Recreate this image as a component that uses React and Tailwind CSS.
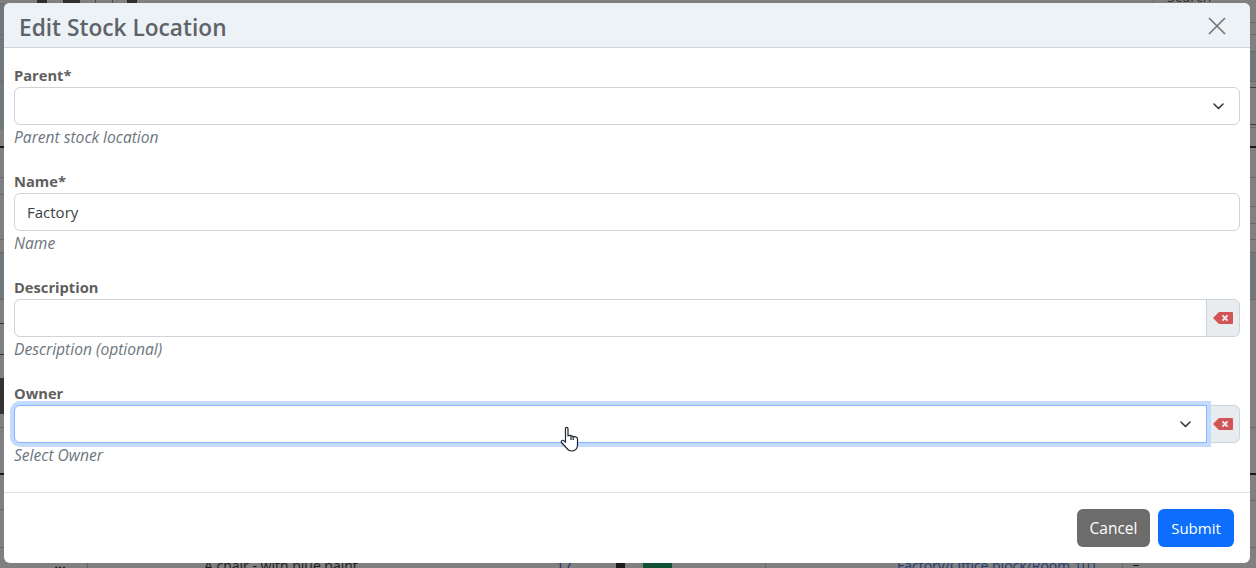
import React from "react";

const font = { fontFamily: '"Open Sans", "Noto Sans", sans-serif' };

const row = "border-t border-[#6a6a6a]";
const tint = "bg-[#71787c] border-t border-[#6a6a6a]";
const dark = "border-t-2 border-[#1a1a1a]";

// edges of the page behind the modal: [height, classes]
const leftEdge = [
  [31, tint], [47, tint], [48, tint], [17, "bg-[#808080]"], [31, dark], [17, row], [45, row],
  [13, row], [47, tint], [24, row], [31, "border-t border-[#333333]"], [24, "border-t border-[#333333]"],
  [36, "bg-[#333333]"], [13, "bg-[#808080]"], [46, row], [36, dark], [38, row], [16, row],
];

const rightEdge = [
  [19, "bg-[#808080]"], [12, row], [17, row], [30, tint], [6, row], [37, "border-t border-[#3f3f3f]"],
  [3, "border-t border-[#3f3f3f]"], [19, row], [31, dark], [29, row], [17, row], [16, row],
  [13, row], [47, tint], [128, row], [46, row], [27, dark], [47, row], [16, row],
];

const Edge = ({ parts, className }) => (
  <div className={`flex flex-col ${className}`}>
    {parts.map(([h, cls], i) => (
      <div key={i} className={cls} style={{ height: h }} />
    ))}
  </div>
);

const Chevron = () => (
  <svg width="11" height="7" viewBox="0 0 11 7" fill="none" className="shrink-0">
    <path d="M1 1 L5.5 5.5 L10 1" stroke="#343a40" strokeWidth="1.6" strokeLinecap="round" strokeLinejoin="round" />
  </svg>
);

const Backspace = () => (
  <svg width="20" height="12" viewBox="0 0 20 12">
    <path d="M6 0 H19 A1 1 0 0 1 20 1 V11 A1 1 0 0 1 19 12 H6 L0 6 Z" fill="#d25454" />
    <path d="M9.5 3.4 L14.5 8.6 M14.5 3.4 L9.5 8.6" stroke="#e9ecef" strokeWidth="2" />
  </svg>
);

const ClearButton = () => (
  <div className="w-[34px] h-[38px] shrink-0 -ml-px flex items-center justify-center bg-[#e9ecef] border border-[#ced4da] rounded-r-[6px]">
    <Backspace />
  </div>
);

const Field = ({ label, hint, children }) => (
  <div className="h-[106px]">
    <div className="h-[23px] text-[14.7px] leading-[22px] font-bold text-[#5f5f5f]">{label}</div>
    {children}
    <div className="text-[15.6px] leading-[24px] italic text-[#6c757d]">{hint}</div>
  </div>
);

const Cursor = () => (
  <svg className="absolute left-[545px] top-[20px]" width="20" height="26" viewBox="0 0 20 26" fill="white" stroke="#1f2533" strokeWidth="1.2" strokeLinejoin="round">
    <path d="M5.5 2.5 C5.5 1 8 1 8 2.5 V10 L9 9.5 C10 9 11 9.5 11 10.2 C12 9.6 13 10 13.2 10.8 C14.2 10.4 17.5 10.5 17.5 13 V19 C17.5 22.5 15 25 11.5 25 C8.5 25 7.5 23.5 6 21.5 L1.5 16.5 C0.6 15.2 2.2 13.6 3.6 14.6 L5.5 16.2 Z" />
    <path d="M11 10.2 V14 M13.2 10.8 V14" fill="none" />
  </svg>
);

const PageBehind = () => (
  <div className="col-start-1 row-start-1 flex flex-col h-[568px]">
    <div className="h-[3px] shrink-0 overflow-hidden flex items-start pl-[37px]">
      <div className="w-[10px] h-[3px] bg-[#2e2e2e]" />
      <div className="w-[17px] h-[3px] ml-[16px] bg-[#2e2e2e]" />
      <div className="w-[18px] h-[3px] ml-[15px] border-x border-[#4a4a4a]" />
      <div className="w-[10px] h-[3px] ml-[14px] bg-[#2e2e2e]" />
      <div className="ml-auto mr-[45px] w-[58px] pl-[13px] border-l border-[#666666] -mt-[13px] pt-[0px] text-[14px] leading-[20px] h-[20px] text-[#2e2e2e]">Search</div>
    </div>

    <div className="flex-1 flex justify-between">
      <Edge parts={leftEdge} className="w-[4px]" />
      <Edge parts={rightEdge} className="w-[6px]" />
    </div>

    <div className="h-[5px] shrink-0 overflow-hidden grid grid-cols-[87px_108px_353px_217px_125px_232px_134px] text-[14px] leading-[20px]">
      <div className="pl-[55px] text-[8px] leading-[6px] tracking-[1px] text-[#1c1c1c] pt-px">▪▪▪</div>
      <div className="h-[5px] border-l border-[#666666]" />
      <div className="h-[5px] border-l border-[#666666] pl-[8px] -mt-[7px] text-[#1c1c1c]">A chair - with blue paint</div>
      <div className="flex items-start pl-[8px] -mt-[7px] text-[#1f2f66]">
        <span>17</span>
        <div className="w-[9px] h-[12px] ml-[44px] bg-[#1c1c1c]" />
        <div className="w-[29px] h-[12px] ml-[18px] bg-[#0f5132]" />
      </div>
      <div className="h-[5px] border-l border-[#666666]" />
      <div className="h-[5px] border-l border-[#666666] pl-[6px] -mt-[7px] text-[#1f3a75]">Factory/Office block/Room 101</div>
      <div className="h-[5px] border-l border-[#666666] pl-[10px]">
        <div className="w-[6px] h-px mt-[2px] bg-[#1c1c1c]" />
      </div>
    </div>
  </div>
);

export default function App() {
  return (
    <div className="grid w-[1256px] h-[568px] overflow-hidden bg-[#808080]" style={font}>
      <PageBehind />

      <div className="col-start-1 row-start-1 pt-[3px] pl-[4px]">
        <div className="w-[1246px] h-[560px] flex flex-col bg-white rounded-[6px] overflow-hidden">
          <div className="h-[45px] shrink-0 flex items-center justify-between pl-[15px] pr-[24px] bg-[#edf2f7] border-b border-[#ced4da]">
            <h5 className="mt-[5px] text-[22.7px] leading-[40px] font-semibold text-[#5f6368]">Edit Stock Location</h5>
            <svg className="mt-px" width="18" height="18" viewBox="0 0 18 18" fill="none">
              <path d="M1 1 L17 17 M17 1 L1 17" stroke="#757575" strokeWidth="1.7" />
            </svg>
          </div>

          <div className="flex-1 pt-[16px] px-[10px]">
            <Field label="Parent*" hint="Parent stock location">
              <div className="h-[38px] flex items-center justify-end pr-[15px] bg-white border border-[#ced4da] rounded-[6px]">
                <Chevron />
              </div>
            </Field>
            <Field label="Name*" hint="Name">
              <div className="h-[38px] flex items-center pl-[12px] text-[15px] text-[#3a3f44] bg-white border border-[#ced4da] rounded-[6px]">
                Factory
              </div>
            </Field>
            <Field label="Description" hint="Description (optional)">
              <div className="flex">
                <div className="flex-1 h-[38px] bg-white border border-[#ced4da] rounded-l-[6px]" />
                <ClearButton />
              </div>
            </Field>
            <Field label="Owner" hint="Select Owner">
              <div className="flex">
                <div className="relative z-10 flex-1 h-[38px] flex items-center justify-end pr-[15px] bg-white border border-[#86b7fe] rounded-l-[6px] shadow-[0_0_0_4px_#c2dbfe]">
                  <Chevron />
                  <Cursor />
                </div>
                <ClearButton />
              </div>
            </Field>
          </div>

          <div className="h-[71px] shrink-0 flex items-center justify-end gap-2 pr-[16px] border-t border-[#dee2e6]">
            <div className="h-[38px] w-[73px] pt-px flex items-center justify-center rounded-[6px] bg-[#6c6c6c] text-white text-[15.5px]">Cancel</div>
            <div className="h-[38px] w-[76px] flex items-center justify-center rounded-[6px] bg-[#0d6efd] text-white text-[15px]">Submit</div>
          </div>
        </div>
      </div>
    </div>
  );
}
